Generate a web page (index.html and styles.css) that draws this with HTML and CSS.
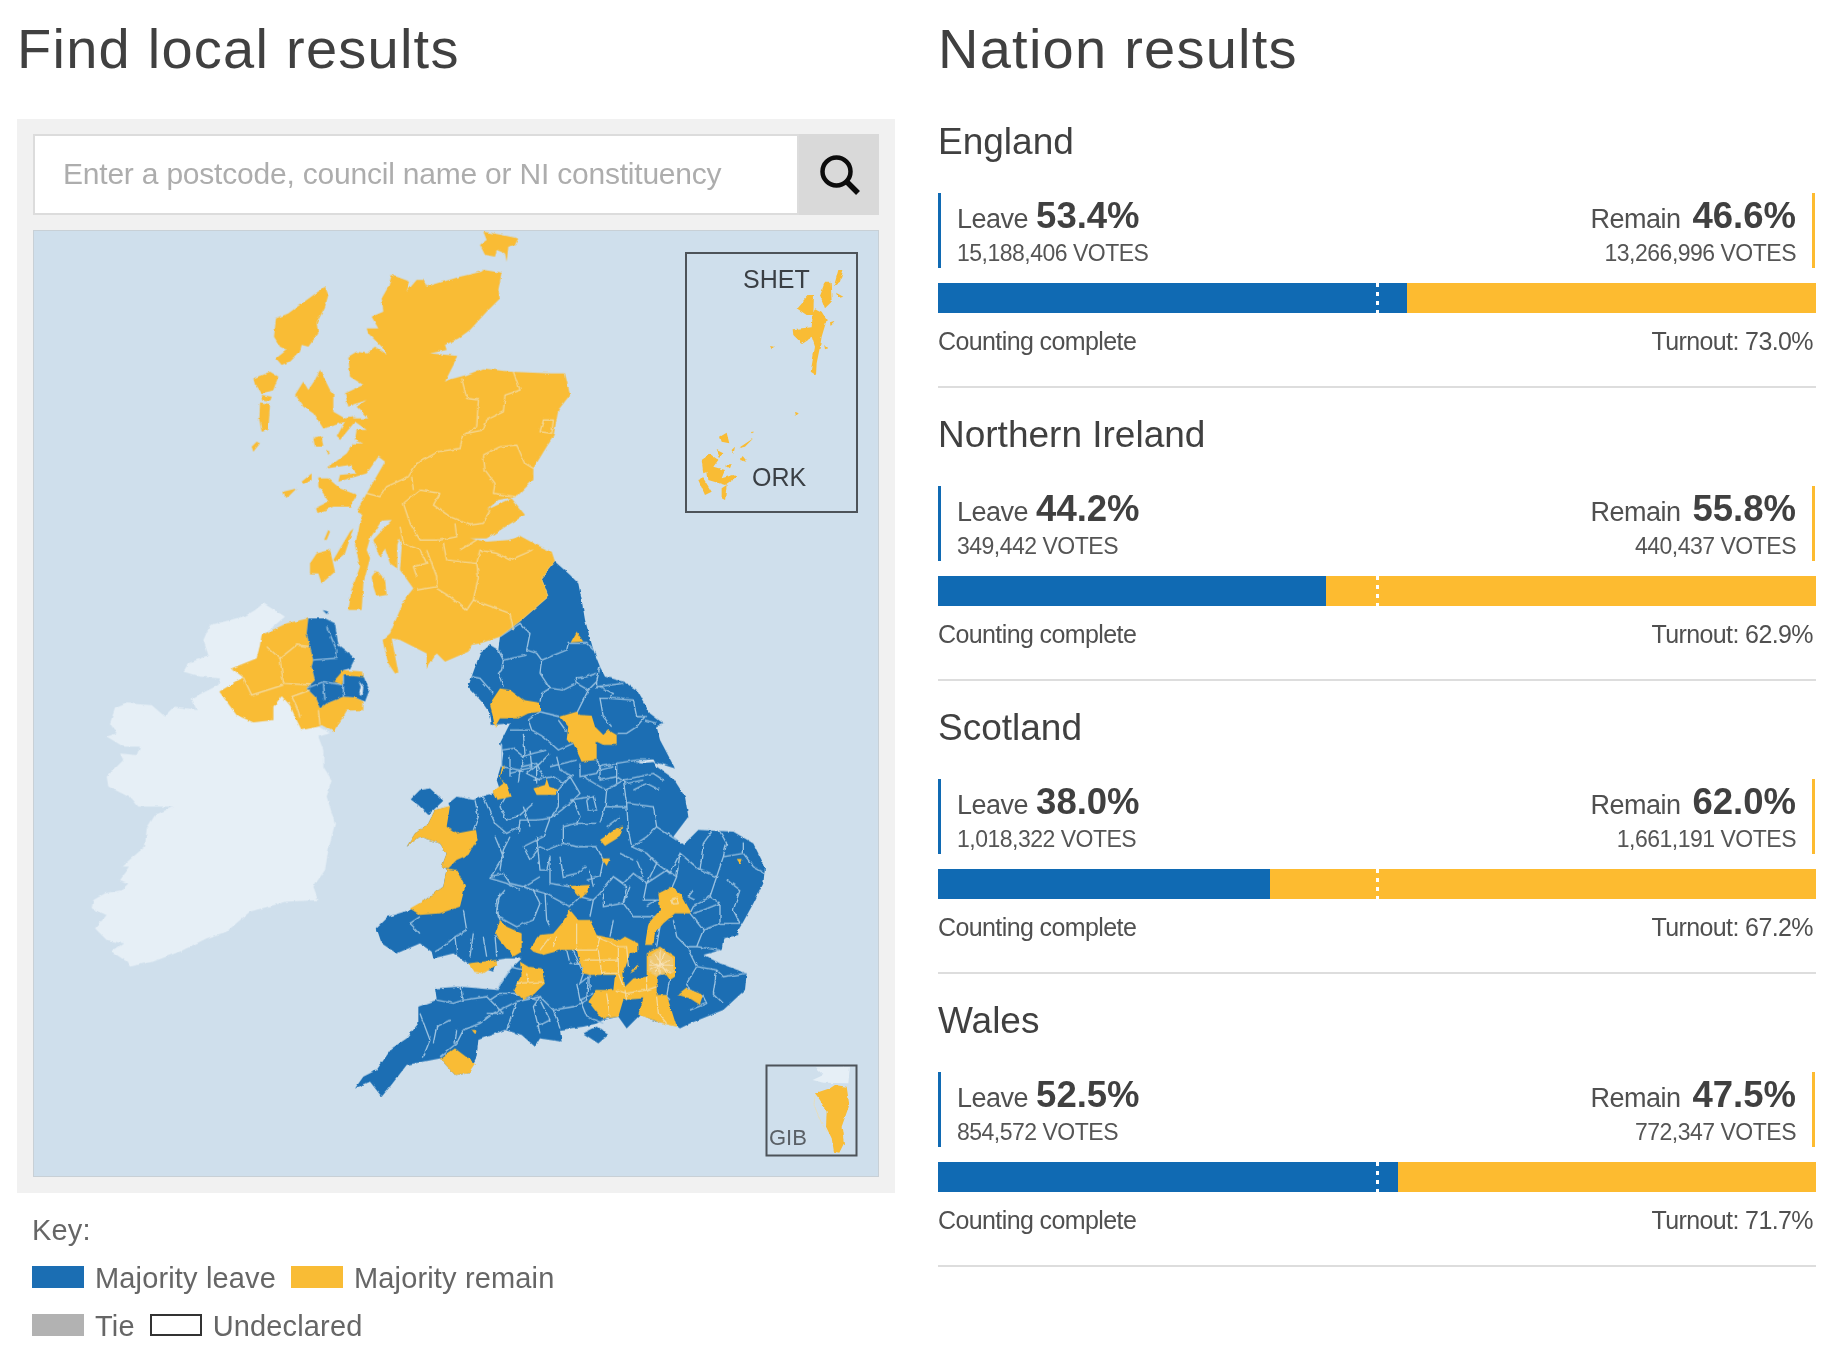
FILE: index.html
```html
<!DOCTYPE html>
<html lang="en">
<head>
<meta charset="utf-8">
<title>EU referendum results</title>
<link rel="stylesheet" href="styles.css">
</head>
<body>
<main class="page">
  <section class="local">
    <h1 class="title">Find local results</h1>
    <div class="panel">
      <div class="search">
        <div class="search-input">Enter a postcode, council name or NI constituency</div>
        <div class="search-btn">
          <svg class="search-icon" viewBox="0 0 44 44"><circle cx="17.5" cy="17.5" r="14" class="lens"/><path d="M28 28L39 39" class="handle"/></svg>
        </div>
      </div>
      <div class="map">
        <svg class="map-svg" viewBox="33 230 846 947">
          <defs>
            <filter id="rough" x="-5%" y="-5%" width="110%" height="110%">
              <feTurbulence type="fractalNoise" baseFrequency="0.05" numOctaves="3" seed="4" result="n"/>
              <feDisplacementMap in="SourceGraphic" in2="n" scale="9" xChannelSelector="R" yChannelSelector="G"/>
              <feGaussianBlur stdDeviation="0.8"/>
            </filter>
          </defs>
          <g transform="scale(.33333)">
            <g filter="url(#rough)">
              <!-- Ireland -->
              <g transform="translate(240 1770)">
                <path class="ie" d="M550,40L615,80L585,105L545,135L540,165L530,205L455,235L490,262L418,305L470,375L520,397L580,390L580,350L605,318L630,345L645,380L665,420L715,410L750,430L715,440L730,480L730,530L755,570L740,620L765,700L745,780L735,840L700,890L715,930L620,935L510,965L440,1025L380,1045L300,1085L220,1115L150,1130L140,1115L95,1085L130,1060L80,1050L45,1015L80,975L35,955L40,930L75,910L125,900L145,880L120,870L150,830L125,830L195,770L200,715L225,675L280,650L175,650L155,625L85,590L80,560L130,510L120,490L170,495L180,470L130,470L80,440L110,430L90,400L105,355L140,340L215,345L255,380L285,350L350,360L335,325L415,285L420,265L360,260L310,245L325,220L385,195L370,150L390,105L450,90L500,75L525,60Z"/>
                <!-- Northern Ireland -->
                <path class="re" d="M685,85L620,100L545,135L540,165L530,205L455,235L490,262L418,305L470,375L520,397L580,390L580,350L605,318L630,345L645,380L665,420L715,410L725,405L760,425L790,380L800,362L850,360L850,335L825,322L790,320L740,340L720,355L705,320L680,295L705,270L695,230L700,210L680,130Z"/>
                <path class="le" d="M685,85L735,85L765,100L775,165L825,205L810,235L790,240L790,255L850,258L868,300L855,335L825,322L790,320L740,340L720,355L705,320L680,295L705,270L695,230L700,210L680,130Z"/>
                <path class="re" d="M760,275L790,240L850,245L850,262L792,255L785,285Z"/>
                <path class="sea" d="M835,272L850,290L848,318L838,310L842,290Z"/>
                <path class="le" d="M728,60L745,65L740,72Z"/>
                <path class="bdy-y" d="M560,170L600,205L650,165L690,170M600,205L610,280L690,285M490,262L515,315L610,285M635,320L690,300M635,320L650,350L660,380M715,360L720,405"/>
                <path class="bdy-b" d="M740,110L770,180L770,205L700,210M730,280L735,330M790,260L790,320M680,295L730,275L790,285"/>
              </g>
              <!-- England and Wales -->
              <g transform="translate(1020 2040)">
                <path class="le" d="M645,-355L690,-315L715,-290L725,-240L735,-180L760,-90L780,-40L795,-10L850,5L890,30L930,100L970,130L950,140L960,180L1005,265L940,245L950,260L1000,295L1035,350L1045,410L1000,470L1030,495L1075,450L1180,455L1240,490L1275,560L1270,610L1240,670L1210,725L1195,750L1195,765L1150,775L1145,810L1090,825L1140,850L1220,880L1215,930L1150,990L1050,1030L1020,1045L1000,1030L950,1025L900,1005L860,1045L835,1010L790,1020L770,1030L730,1040L660,1050L665,1085L600,1075L585,1100L545,1065L495,1050L415,1080L410,1130L385,1180L345,1185L300,1135L200,1155L150,1220L125,1250L90,1205L45,1225L70,1190L110,1170L155,1105L200,1075L235,1030L235,980L290,960L285,925L360,920L470,930L510,870L545,835L500,835L470,840L460,875L385,850L340,820L280,835L275,815L240,790L170,820L125,790L110,745L145,710L210,690L255,660L310,620L320,565L305,560L320,520L300,490L240,470L200,500L225,460L265,430L285,390L330,380L325,370L350,350L400,360L440,345L460,340L480,330L470,300L485,250L490,220L480,190L510,130L455,135L450,100L425,65L385,20L395,-10L420,-80L450,-105L475,-90L480,-130L545,-180L625,-250L605,-305Z"/>
                <path class="le" d="M240,330L270,325L310,362L265,405L235,375L212,358Z"/>
                <path class="le" d="M730,1060L770,1040L805,1065L775,1090Z"/>
                <path class="sea" d="M885,245L915,240L940,238L945,246L915,248Z"/>
                <path class="bdy-b" d="M405,360L415,410L400,450M430,350L465,430L500,460L540,440M465,470L490,530L450,595L500,610L540,630M480,640L470,690L480,720M240,710L210,730L240,760M370,690L380,750L345,770L310,800L285,815M400,760L390,830M430,770L440,830M345,770L350,820M465,765L470,830M510,870L490,900L470,930M360,920L370,960L440,950L490,1000M290,960L340,970L370,960M240,1000L270,1080L250,1130M330,1020L290,1040L280,1090M350,1050L345,1090M420,1030L370,1050L350,1090L300,1130M420,1030L460,1000L530,965L600,950L580,980L600,1060M600,950L640,990L660,1045M530,965L500,1050M640,990L700,980L740,960L745,890L720,910L730,880L700,810M490,1000L440,1000"/>
                <path class="re" d="M385,850L470,840L470,855L430,880L400,875Z"/>
                <path class="re" d="M210,685L255,660L310,620L320,565L350,570L375,620L360,680L300,700L240,705Z"/>
                <path class="re" d="M200,500L225,460L265,430L285,390L330,378L320,440L350,460L405,450L410,480L385,525L350,540L325,565L305,560L320,520L300,490L240,470Z"/>
                <path class="re" d="M395,1050L410,1050L405,1062Z"/>
                <path class="re" d="M300,1135L345,1105L385,1135L405,1150L385,1180L345,1185Z"/>
              </g>
              <!-- Northern England -->
              <g transform="translate(1380 1650)">
                <path class="bdy-b" d="M120,260L180,220L210,250L200,300L230,310L245,330L320,300L325,280L380,280L400,300M115,300L130,330L125,360L115,370L130,410M130,330L200,315M245,330L240,370L270,415L245,430L240,455M270,415L310,420L350,400L385,420L410,395L420,350M35,380L60,385L100,430M350,400L345,385L380,380L410,370M385,420L350,490M410,395L410,410L490,400M420,410L460,430L450,445L420,445L430,500L455,530M450,445L520,450L530,500L555,500L530,530L500,550L470,550M555,510L590,520M205,510L240,485L300,500M205,510L215,540L250,560L295,600L340,580M295,510L320,545M150,540L210,540M410,630L420,650L470,640L530,630L560,630M125,580L125,650M125,600L160,595L190,620L220,610L260,600M190,550L195,610L185,650L230,640L250,680M125,650L180,660L230,650L270,610M270,650L310,640L350,630M290,620L300,660L340,680M360,640L360,680L410,670L420,650M470,640L470,700M420,650L420,690L470,680L500,700L550,690M180,660L175,700M230,650L230,700M220,690L280,680L310,700M150,620L150,680M210,600L215,650"/>
                <path class="re" d="M120,415L150,420L190,450L240,458L240,485L205,490L175,505L120,505L105,530L90,460Z"/>
                <path class="re" d="M300,500L350,485L360,495L395,497L405,530L430,555L445,540L470,555L470,585L430,585L410,575L410,630L365,635L340,580L320,570L325,530Z"/>
                <path class="re" d="M350,245L370,275L332,277Z"/>
              </g>
              <!-- Midlands and the south east -->
              <g transform="translate(1470 2280)">
                <path class="bdy-b" d="M205,90L240,50L270,100L250,120L270,170L260,190M205,90L205,140L180,175L140,180L90,180L85,220M50,105L30,140L50,180L90,165L130,130M280,50L330,80L350,90L345,140L330,190M290,120L310,110L320,150L295,150L290,120M400,60L410,130L415,210L425,260L470,280L500,310L470,370M350,90L400,60L490,40L520,60M410,130L490,140L500,200L560,240M345,140L410,140M250,120L215,150L180,175L160,230L100,260L120,300L150,260L170,270L220,250L220,200L260,190M220,250L260,260L320,260L340,300L330,350L290,360M260,190L320,190M140,230L150,330L170,330L180,290M180,290L180,370L240,380M210,290L220,350L260,340L290,320M0,350L40,340L60,370L100,380L150,350M45,390L20,420L25,470L80,500L130,480L150,430L130,390L100,380M130,390L165,400L170,480L180,500M165,400L240,440L270,410L310,420L330,400L370,350L400,370L430,340L470,370L530,330L560,350M310,420L300,470M340,400L340,440L400,430L420,380M370,350L410,380L400,430L430,470L500,470M470,370L460,420L510,420M500,310L540,340L570,280L630,330L680,350L700,290L760,280L790,320L825,340M570,280L560,350L545,385M630,330L640,250L665,215M680,350L660,410L610,440L600,460M700,290L710,250L690,215M760,280L760,250M710,360L750,390L730,450L750,490M660,410L690,430L640,450L610,460M600,460L640,510L690,490L750,490M690,430L690,490M640,510L620,560L690,570M550,480L560,530L590,560L620,560M510,500L500,560M590,560L620,620L680,630L700,650L770,640M620,620L590,670L600,690M680,630L670,700L700,730M600,690L640,710L650,730L600,750M370,480L360,530M300,645L300,690M230,570L240,610L280,610M260,670L270,720L310,700M50,700L90,700M150,720L180,780L140,800M60,620L100,630M270,720L290,770L340,790M540,650L530,710L540,720M140,720L70,700L30,700L0,720M290,600L300,640M240,120L300,110M150,60L110,40L150,10M60,40L100,30M330,30L370,20M430,90L470,70L510,90M500,200L470,230L425,260M120,200L100,140M60,230L40,270L30,330M350,200L390,170M300,330L310,380M390,280L430,300M440,300L460,350M470,440L500,420M610,390L595,410L615,420"/>
                <path class="re" d="M35,25L45,15L30,55L50,70L65,110L20,120L8,95L40,70L30,50Z"/>
                <path class="re" d="M130,85L165,75L170,55L178,80L205,90L195,105L140,105Z"/>
                <path class="re" d="M330,240L380,205L400,200L390,230L345,258Z"/>
                <path class="re" d="M335,295L360,295L350,318Z"/>
                <path class="re" d="M740,297L755,297L750,312Z"/>
                <path class="re" d="M240,378L300,375L295,395L272,415Z"/>
                <path class="re" d="M505,400L545,380L575,405L605,460L555,460L520,490L495,520L490,555L465,555L475,490L510,450Z"/>
                <path class="re" d="M30,480L50,500L95,520L95,575L70,590L20,530L15,520Z"/>
                <path class="re" d="M90,605L115,620L155,625L165,670L130,705L100,720L70,690L95,645Z"/>
                <path class="re" d="M565,705L590,685L640,705L630,735L600,715Z"/>
                <path class="re" d="M120,565L150,525L190,520L215,490L240,450L265,480L300,480L320,525L390,540L405,530L445,550L445,575L420,580L400,640L405,680L430,655L470,650L470,580L510,560L555,590L555,650L540,660L525,640L505,640L500,660L500,705L530,705L560,800L520,790L445,765L460,715L400,720L385,770L350,775L330,770L295,725L320,690L370,690L375,645L300,645L280,640L260,570L215,570L160,585L130,575Z"/>
                <path class="re" d="M420,640L445,610L440,630Z"/>
                <path class="ldn" d="M475,590L510,565L550,595L550,640L525,635L500,650L475,635Z"/>
                <path class="bdy-y" d="M260,490L260,570L320,570L330,530M320,530L385,560L410,560L415,620M325,570L335,640L385,640M280,600L385,600M385,560L385,640L400,680M380,690L410,700L470,690L500,680M350,700L360,770M405,690L410,720M500,710L505,760L530,790M470,690L470,650M80,670L160,665M110,640L115,670M200,530L190,560M150,570L180,530M545,420L560,415L565,430L550,432Z"/>
                <path class="bdy-l" d="M480,600L545,640M540,600L480,630M510,570L510,645M478,615L550,615M495,580L530,640M525,580L495,640"/>
              </g>
              <!-- Scotland -->
              <g transform="translate(600 690)">
                <path class="re" d="M575,135L630,155L620,185L650,150L670,150L680,170L780,140L845,125L850,120L905,128L895,180L900,205L860,245L810,300L775,325L735,345L740,360L690,370L775,378L755,415L735,455L700,490L680,485L745,450L800,435L850,415L930,425L1050,430L1095,430L1110,495L1075,540L1060,620L1040,650L1000,715L1000,750L950,800L895,810L860,840L935,805L975,855L925,885L860,925L810,925L860,935L930,930L960,918L1010,945L1055,965L1065,995L1025,1045L1045,1100L965,1170L900,1220L840,1240L815,1245L805,1265L735,1295L710,1270L680,1315L680,1270L600,1230L575,1225L595,1328L585,1330L565,1300L548,1230L570,1210L600,1140L620,1100L640,1075L600,1020L605,950L598,925L592,945L592,1015L570,1000L555,955L540,985L520,930L575,870L545,872L510,925L500,960L510,985L490,1060L485,1140L445,1140L455,1080L480,1010L465,945L480,880L490,855L470,845L500,790L555,695L535,680L500,730L415,755L420,735L470,730L450,705L380,715L440,670L460,640L490,640L465,630L470,600L500,600L465,575L420,630L410,620L440,565L505,565L470,530L500,510L445,530L435,490L490,465L450,440L445,380L470,365L500,370L525,350L560,375L545,350L505,310L500,295L535,295L515,260L550,245L545,205L565,170Z"/>
                <path class="re" d="M375,170L385,195L375,230L350,280L355,310L325,350L305,345L300,365L270,395L245,405L228,385L260,360L240,350L222,320L228,265L265,250L285,235Z"/>
                <path class="re" d="M160,445L210,425L235,440L220,480L185,490L165,460Z"/>
                <path class="re" d="M185,495L215,500L210,515L190,512Z"/>
                <path class="re" d="M180,520L210,525L205,600L185,605L178,570Z"/>
                <path class="re" d="M170,635L180,640L160,665L155,650Z"/>
                <path class="re" d="M285,495L310,455L325,480L345,450L360,420L390,480L400,490L400,545L435,565L470,560L410,585L370,595L340,550L310,530Z"/>
                <path class="re" d="M340,625L365,620L370,650L345,650Z"/>
                <path class="re" d="M380,660L392,665L385,675Z"/>
                <path class="re" d="M305,755L335,730L335,750L310,765Z"/>
                <path class="re" d="M250,785L290,775L265,800L255,803Z"/>
                <path class="re" d="M355,745L385,745L420,775L470,795L450,830L400,830L350,850L345,835L385,815L370,790L355,770Z"/>
                <path class="re" d="M330,1000L350,970L390,960L405,1025L365,1060L355,1030L330,1030Z"/>
                <path class="re" d="M400,990L450,905L460,895L435,970L405,995Z"/>
                <path class="re" d="M372,930L385,900L390,905L380,930Z"/>
                <path class="re" d="M515,1040L530,1020L555,1050L560,1095L530,1100L520,1070Z"/>
                <path class="re" d="M850,5L880,10L905,15L955,25L945,45L925,50L920,95L915,70L890,60L885,80L855,75L840,45L860,30Z"/>
                <path class="bdy-y" d="M785,445L800,505L835,510L830,590L790,615L780,655L715,665L650,700L625,740L560,770L540,800L500,790M940,425L960,480L915,495L910,545L860,570L850,600L800,610M850,675L900,650L950,645L975,700L1000,715M850,675L855,720L885,760L880,790L950,800M720,790L700,825L750,860L810,885L850,880L870,840M610,820L660,780L720,790M610,820L630,880L660,930L720,930L770,920L765,880M635,740L640,780M600,890L610,940L660,960L680,1000L640,1010L650,1040M680,960L710,1040L710,1070L650,1080M730,940L740,990L830,1000L835,1040L820,1110L800,1140L750,1100L710,1075M830,1000L840,960L890,970L930,990L1000,960M780,960L830,930M820,1110L930,1150L940,1200M1030,570L1060,570L1055,610L1020,605Z"/>
              </g>
            </g>
            <!-- Shetland / Orkney inset -->
            <g transform="translate(2010 720)" filter="url(#rough)">
              <path class="re" d="M505,90L520,90L510,125L492,138ZM465,125L482,125L485,185L465,205L450,165ZM498,158L520,170L505,175ZM415,165L432,165L430,225L410,225L380,205ZM435,205L455,215L470,240L455,290L450,320L440,370L438,405L422,395L435,320L425,290L395,310L370,285L368,268L425,262L428,225ZM462,312L475,325L465,328ZM480,250L495,245L482,258ZM300,318L312,320L305,328ZM375,515L386,520L378,528Z"/>
              <path class="re" d="M150,590L170,578L178,610L155,605ZM245,575L252,575L248,580ZM205,625L250,595L225,620ZM185,630L195,620L190,645ZM140,630L160,640L150,655ZM210,660L218,648L232,665ZM165,675L185,672L180,685ZM95,660L120,642L145,660L130,680L165,690L155,715L190,705L200,710L165,735L115,720L112,695L100,700ZM85,720L100,715L125,755L105,765ZM155,745L170,735L165,780L155,775Z"/>
            </g>
            <!-- Gibraltar inset -->
            <g transform="translate(2220 3120)" filter="url(#rough)">
              <path class="ie" d="M225,82L330,80L325,130L250,128L218,120L250,105Z"/>
              <path class="re" d="M225,160L270,145L285,135L320,140L328,195L305,260L312,310L298,338L282,335L275,295L258,260L260,215L240,180Z"/>
              <path class="gib-line" d="M225,165L222,195L245,250L262,275"/>
            </g>
          </g>
          <rect class="inset" x="686" y="253" width="171" height="259"/>
          <rect class="inset" x="766.500" y="1065.500" width="90" height="90"/>
          <text class="inset-label" x="743" y="288">SHET</text>
          <text class="inset-label" x="752" y="486">ORK</text>
          <text class="inset-label gib" x="769" y="1145">GIB</text>
        </svg>
      </div>
    </div>
    <div class="key">
      <div class="key-label">Key:</div>
      <div class="key-row">
        <span class="swatch swatch-leave"></span><span class="key-text">Majority leave</span>
        <span class="swatch swatch-remain"></span><span class="key-text">Majority remain</span>
      </div>
      <div class="key-row">
        <span class="swatch swatch-tie"></span><span class="key-text">Tie</span>
        <span class="swatch swatch-undeclared"></span><span class="key-text">Undeclared</span>
      </div>
    </div>
  </section>

  <section class="nations">
    <h1 class="title">Nation results</h1>

    <article class="nation">
      <h2 class="nation-name">England</h2>
      <div class="scores">
        <div class="score score-leave"><div class="score-main">Leave <b>53.4%</b></div><div class="votes">15,188,406 VOTES</div></div>
        <div class="score score-remain"><div class="score-main">Remain <b>46.6%</b></div><div class="votes">13,266,996 VOTES</div></div>
      </div>
      <div class="bar"><div class="bar-leave" style="width:53.4%"></div><div class="bar-remain"></div><span class="bar-mid"></span></div>
      <div class="foot"><span>Counting complete</span><span class="turnout">Turnout: 73.0%</span></div>
    </article>

    <article class="nation">
      <h2 class="nation-name">Northern Ireland</h2>
      <div class="scores">
        <div class="score score-leave"><div class="score-main">Leave <b>44.2%</b></div><div class="votes">349,442 VOTES</div></div>
        <div class="score score-remain"><div class="score-main">Remain <b>55.8%</b></div><div class="votes">440,437 VOTES</div></div>
      </div>
      <div class="bar"><div class="bar-leave" style="width:44.2%"></div><div class="bar-remain"></div><span class="bar-mid"></span></div>
      <div class="foot"><span>Counting complete</span><span class="turnout">Turnout: 62.9%</span></div>
    </article>

    <article class="nation">
      <h2 class="nation-name">Scotland</h2>
      <div class="scores">
        <div class="score score-leave"><div class="score-main">Leave <b>38.0%</b></div><div class="votes">1,018,322 VOTES</div></div>
        <div class="score score-remain"><div class="score-main">Remain <b>62.0%</b></div><div class="votes">1,661,191 VOTES</div></div>
      </div>
      <div class="bar"><div class="bar-leave" style="width:37.8%"></div><div class="bar-remain"></div><span class="bar-mid"></span></div>
      <div class="foot"><span>Counting complete</span><span class="turnout">Turnout: 67.2%</span></div>
    </article>

    <article class="nation">
      <h2 class="nation-name">Wales</h2>
      <div class="scores">
        <div class="score score-leave"><div class="score-main">Leave <b>52.5%</b></div><div class="votes">854,572 VOTES</div></div>
        <div class="score score-remain"><div class="score-main">Remain <b>47.5%</b></div><div class="votes">772,347 VOTES</div></div>
      </div>
      <div class="bar"><div class="bar-leave" style="width:52.4%"></div><div class="bar-remain"></div><span class="bar-mid"></span></div>
      <div class="foot"><span>Counting complete</span><span class="turnout">Turnout: 71.7%</span></div>
    </article>
  </section>
</main>
</body>
</html>
```
FILE: styles.css
```css
* { box-sizing: border-box; }
html, body { margin: 0; padding: 0; background: #fff; }
body { font-family: "Liberation Sans", Arial, sans-serif; color: #404040; }
.page { display: flex; width: 1834px; height: 1356px; padding-left: 17px; gap: 43px; overflow: hidden; filter: blur(0.4px); }
.local, .nations { width: 878px; flex: none; }

.title { margin: 0; height: 95px; padding-top: 15px; font-size: 56px; line-height: 67px; font-weight: 400; letter-spacing: 1.25px; color: #404040; }

.panel { margin-top: 24px; height: 1074px; padding: 15px 16px 16px; background: #f1f1f1; }
.search { display: flex; height: 81px; }
.search-input { flex: 1; padding-left: 28px; font-size: 30px; line-height: 75px; letter-spacing: -0.21px; color: #adadad; background: #fff; border: 2px solid #dcdcdc; }
.search-btn { width: 80px; background: #d9d9d9; display: flex; align-items: center; justify-content: center; }
.search-icon { width: 44px; height: 44px; margin: 2px 0 0 4px; }
.lens { fill: none; stroke: #0c0c0c; stroke-width: 4.5; }
.handle { fill: none; stroke: #0c0c0c; stroke-width: 5.500; }

.map { margin-top: 15px; height: 947px; background: #cfdfec; box-shadow: inset 0 0 0 1px #c8d0d6; }
.map-svg { display: block; width: 846px; height: 947px; }
.ie { fill: #e6eff6; }
.le { fill: #1b6eb3; }
.re { fill: #f9bc35; }
.sea { fill: #dbe7f1; }
.ldn { fill: #efc76f; }
.bdy-b { fill: none; stroke: #9cc3e2; stroke-width: 4; }
.bdy-y { fill: none; stroke: #f3dca6; stroke-width: 3.500; }
.bdy-l { fill: none; stroke: #f8e4bc; stroke-width: 3; }
.gib-line { fill: none; stroke: #f0dca8; stroke-width: 2; }
.inset { fill: none; stroke: #4d5359; stroke-width: 2; }
.inset-label { font-family: "Liberation Sans", Arial, sans-serif; font-size: 25px; fill: #3a3f44; }
.inset-label.gib { font-size: 22px; fill: #5a6066; }

.key { padding: 18px 0 0 15px; font-size: 29px; letter-spacing: 0.15px; color: #666; }
.key-label { line-height: 38px; }
.key-row { display: flex; align-items: center; height: 47px; margin-top: 6px; }
.key-row + .key-row { margin-top: 1px; }
.swatch { width: 52px; height: 22px; flex: none; margin-right: 11px; margin-bottom: 4px; }
.key-text + .swatch { margin-left: 15px; }
.swatch-leave { background: #1b6eb3; }
.swatch-remain { background: #f9bc35; }
.swatch-tie { background: #b2b2b2; }
.swatch-undeclared { background: #fff; border: 2px solid #333; }

.nation { height: 293px; padding-top: 24px; border-bottom: 2px solid #ddd; }
.nation-name { margin: 0; font-size: 37px; line-height: 46px; font-weight: 400; color: #404040; }
.scores { display: flex; justify-content: space-between; height: 75px; margin-top: 28px; padding-right: 1px; }
.score { height: 75px; }
.score-leave { border-left: 3px solid #106ab3; padding-left: 16px; }
.score-remain { border-right: 3px solid #fdbb30; padding-right: 16px; text-align: right; }
.score-main { font-size: 27px; line-height: 45px; letter-spacing: -0.5px; color: #505050; height: 45px; }
.score-main b { font-size: 36.500px; letter-spacing: 0; color: #404040; margin-left: 1px; }
.score-remain .score-main b { margin-left: 5px; }
.votes { font-size: 23px; line-height: 28px; letter-spacing: -0.5px; color: #555; margin-top: 1px; }

.bar { position: relative; display: flex; height: 30px; margin-top: 15px; }
.bar-leave { background: #106ab3; }
.bar-remain { flex: 1; background: #fdbb30; }
.bar-mid { position: absolute; left: 438px; top: 0; bottom: 0; width: 3px; background: repeating-linear-gradient(to bottom, #fff 0, #fff 4px, transparent 4px, transparent 9px); }

.foot { display: flex; justify-content: space-between; margin-top: 12px; padding-right: 3px; font-size: 25px; line-height: 32px; letter-spacing: -0.6px; color: #505050; }
```
